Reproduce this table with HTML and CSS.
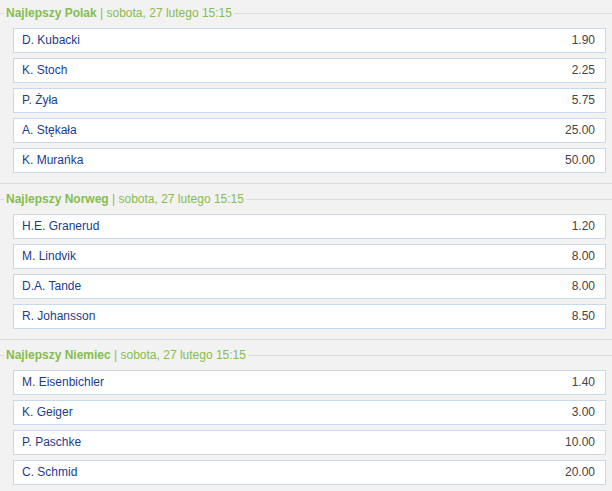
FILE: index.html
```html
<!DOCTYPE html>
<html lang="pl">
<head>
<meta charset="utf-8">
<title>Zakłady</title>
<link rel="stylesheet" href="styles.css">
</head>
<body>
<div class="market">
  <div class="head">
    <span class="pre"></span>
    <span class="title"><b>Najlepszy Polak</b> | sobota, 27 lutego 15:15</span>
    <span class="rule"></span>
  </div>
  <div class="row"><span class="name">D. Kubacki</span><span class="odd">1.90</span></div>
  <div class="row"><span class="name">K. Stoch</span><span class="odd">2.25</span></div>
  <div class="row"><span class="name">P. Żyła</span><span class="odd">5.75</span></div>
  <div class="row"><span class="name">A. Stękała</span><span class="odd">25.00</span></div>
  <div class="row"><span class="name">K. Murańka</span><span class="odd">50.00</span></div>
</div>
<div class="market">
  <div class="head">
    <span class="pre"></span>
    <span class="title"><b>Najlepszy Norweg</b> | sobota, 27 lutego 15:15</span>
    <span class="rule"></span>
  </div>
  <div class="row"><span class="name">H.E. Granerud</span><span class="odd">1.20</span></div>
  <div class="row"><span class="name">M. Lindvik</span><span class="odd">8.00</span></div>
  <div class="row"><span class="name">D.A. Tande</span><span class="odd">8.00</span></div>
  <div class="row"><span class="name">R. Johansson</span><span class="odd">8.50</span></div>
</div>
<div class="market">
  <div class="head">
    <span class="pre"></span>
    <span class="title"><b>Najlepszy Niemiec</b> | sobota, 27 lutego 15:15</span>
    <span class="rule"></span>
  </div>
  <div class="row"><span class="name">M. Eisenbichler</span><span class="odd">1.40</span></div>
  <div class="row"><span class="name">K. Geiger</span><span class="odd">3.00</span></div>
  <div class="row"><span class="name">P. Paschke</span><span class="odd">10.00</span></div>
  <div class="row"><span class="name">C. Schmid</span><span class="odd">20.00</span></div>
</div>
</body>
</html>
```
FILE: styles.css
```css
html, body {
  margin: 0;
  padding: 0;
  background: #f2f2f2;
  font-family: "Liberation Sans", Arial, sans-serif;
  font-size: 12px;
}

.market {
  border-top: 1px solid #dcdcdc;
  padding-bottom: 10px;
}

.market:first-child {
  border-top: none;
}

.head {
  display: flex;
  align-items: flex-start;
  height: 30px;
}

.market:first-child .head {
  height: 28px;
}

.pre, .rule {
  height: 1px;
  background: #dcdcdc;
  margin-top: 15px;
}

.market:first-child .pre,
.market:first-child .rule {
  margin-top: 13px;
}

.pre {
  width: 4px;
}

.rule {
  flex: 1;
}

.title {
  color: #86bd4f;
  line-height: 14px;
  margin-top: 8px;
  padding: 0 2px;
  white-space: nowrap;
}

.market:first-child .title {
  margin-top: 6px;
}

.title b {
  font-weight: bold;
}

.row {
  display: flex;
  justify-content: space-between;
  align-items: center;
  height: 23px;
  line-height: 23px;
  margin: 0 6px 5px 13px;
  padding: 0 10px 0 8px;
  background: #ffffff;
  border: 1px solid #c5daee;
}

.row:last-child {
  margin-bottom: 0;
}

.name {
  color: #1b3c8e;
}

.odd {
  color: #444444;
}
```
